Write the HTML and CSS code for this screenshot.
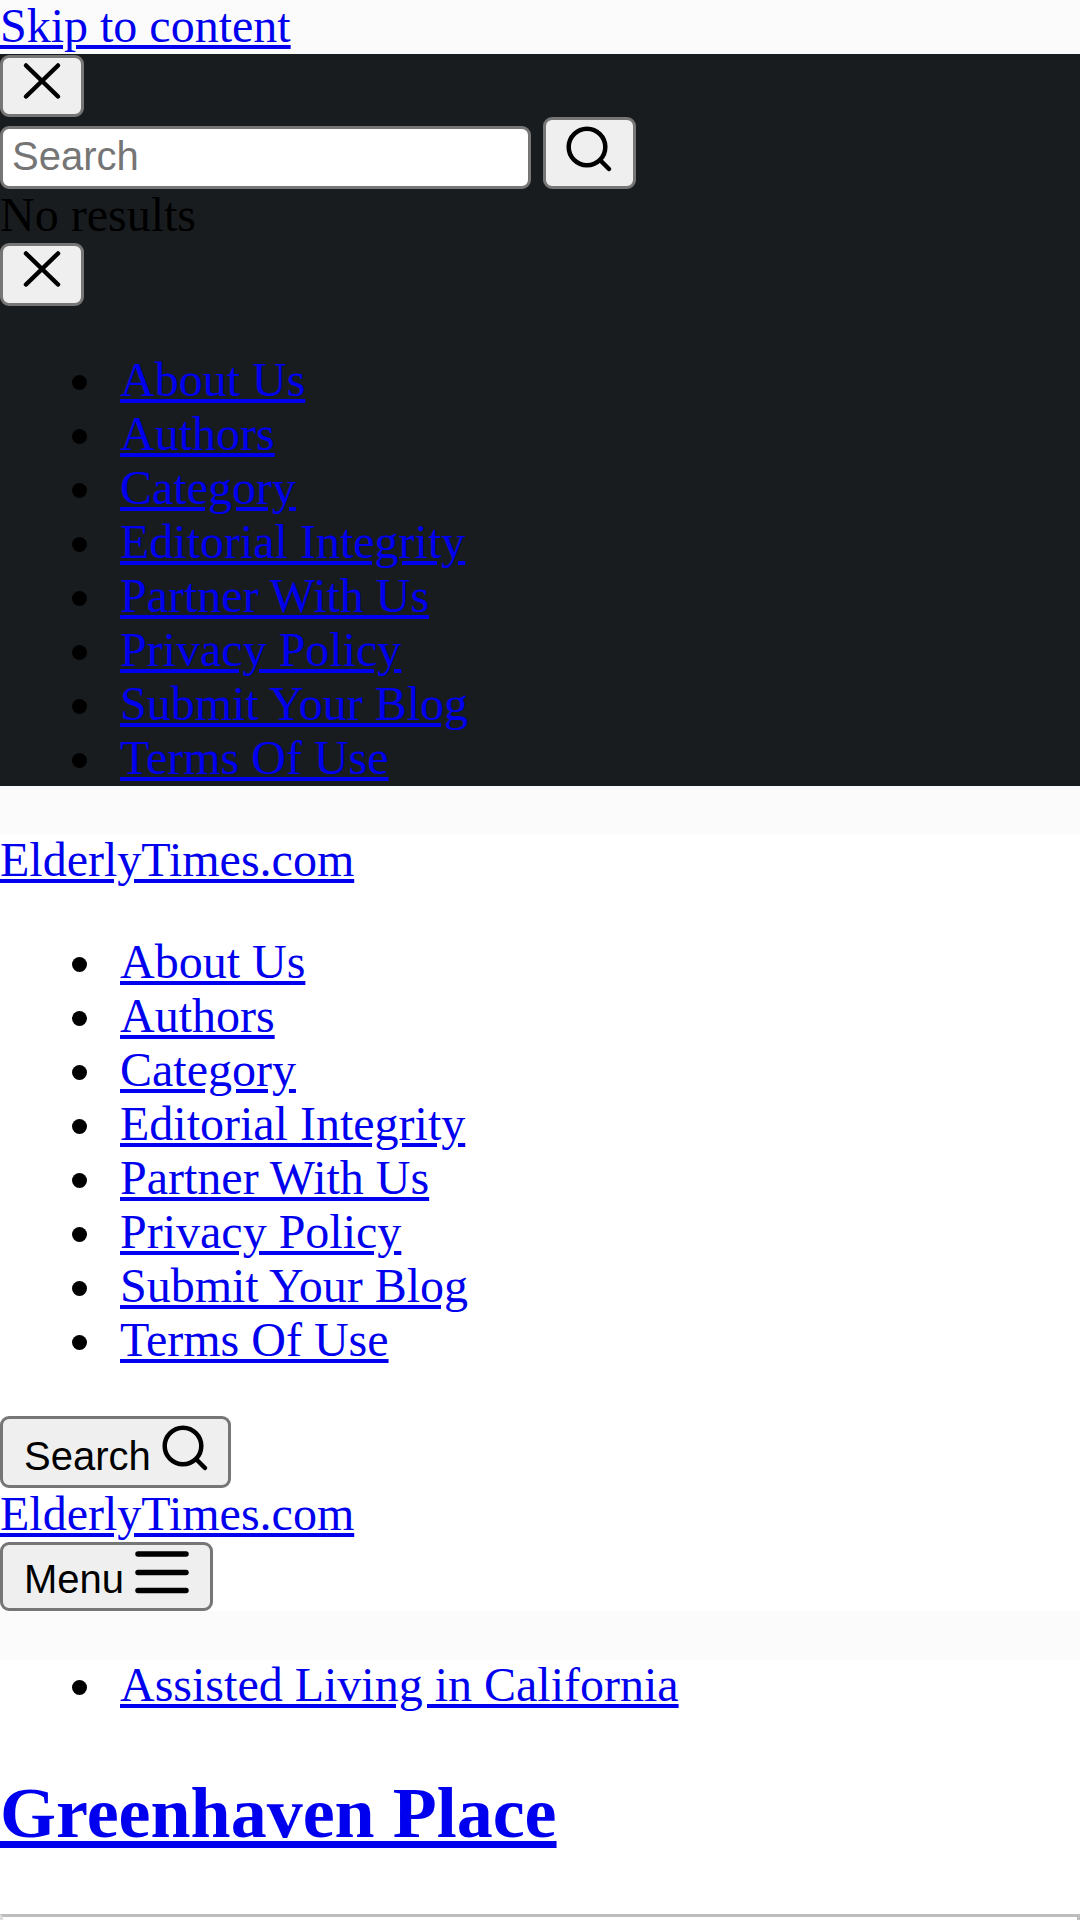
FILE: index.html
```html
<!DOCTYPE html>
<html lang="en">
    <head>
        <meta charset="utf-8">
        <title>Greenhaven Place - ElderlyTimes.com</title>
        <link rel="stylesheet" href="styles.css">
    </head>
    <body>
        <div class="skip">
            <a href="#content">Skip to content</a>
        </div>
        <div class="drawer">
            <div class="drawer-row first">
                <button class="btn btn-icon" aria-label="Close">
                    <svg class="icon" viewBox="0 0 48 48"><path d="M8 8.5 L40 39.5 M40 8.5 L8 39.5"/></svg>
                </button>
            </div>
            <form class="search-form">
                <input class="search-input" type="text" placeholder="Search">
                <button class="btn btn-search" type="button" aria-label="Search">
                    <svg class="icon" viewBox="0 0 48 48"><circle cx="21" cy="21" r="18.3"/><path d="M34.5 34.5 L43 43"/></svg>
                </button>
            </form>
            <div class="no-results">No results</div>
            <div class="drawer-row last">
                <button class="btn btn-icon" aria-label="Close">
                    <svg class="icon" viewBox="0 0 48 48"><path d="M8 8.5 L40 39.5 M40 8.5 L8 39.5"/></svg>
                </button>
            </div>
            <ul class="nav-list">
                <li><a href="#">About Us</a></li>
                <li><a href="#">Authors</a></li>
                <li><a href="#">Category</a></li>
                <li><a href="#">Editorial Integrity</a></li>
                <li><a href="#">Partner With Us</a></li>
                <li><a href="#">Privacy Policy</a></li>
                <li><a href="#">Submit Your Blog</a></li>
                <li><a href="#">Terms Of Use</a></li>
            </ul>
        </div>
        <div class="spacer spacer-top"></div>
        <header class="site-header">
            <div class="brand"><a href="#">ElderlyTimes.com</a></div>
            <ul class="nav-list spaced">
                <li><a href="#">About Us</a></li>
                <li><a href="#">Authors</a></li>
                <li><a href="#">Category</a></li>
                <li><a href="#">Editorial Integrity</a></li>
                <li><a href="#">Partner With Us</a></li>
                <li><a href="#">Privacy Policy</a></li>
                <li><a href="#">Submit Your Blog</a></li>
                <li><a href="#">Terms Of Use</a></li>
            </ul>
            <div class="btn-row">
                <button class="btn btn-label btn-tall">Search
                    <svg class="icon" viewBox="0 0 48 48"><circle cx="21" cy="21" r="18.3"/><path d="M34.5 34.5 L43 43"/></svg>
                </button>
            </div>
            <div class="brand"><a href="#">ElderlyTimes.com</a></div>
            <div class="btn-row">
                <button class="btn btn-label btn-menu">Menu
                    <svg class="icon icon-menu" viewBox="0 0 54 48"><path d="M3 6 H51 M3 24.5 H51 M3 42.5 H51"/></svg>
                </button>
            </div>
        </header>
        <div class="spacer spacer-main"></div>
        <main id="content">
            <ul class="nav-list crumbs">
                <li><a href="#">Assisted Living in California</a></li>
            </ul>
            <h2 class="title"><a href="#">Greenhaven Place</a></h2>
            <div class="panel"></div>
        </main>
    </body>
</html>
```

FILE: styles.css
```css
html {
    height: 1920px;
    overflow: hidden;
    background-color: #fff;
}
body {
    margin: 0;
    height: 1920px;
    overflow: hidden;
    font-family: "Liberation Serif", "Times New Roman", serif;
    font-size: 48px;
    line-height: 54px;
    color: #000;
}
a {
    color: #0000ee;
}
.skip {
    height: 54px;
    line-height: 52px;
    background-color: #fbfbfb;
}
.drawer {
    background-color: #181c1f;
    height: 732px;
    overflow: hidden;
}
.drawer-row {
    display: flex;
    align-items: flex-start;
}
.drawer-row.first {
    padding-top: 1px;
}
.drawer-row.last .btn-icon {
    height: 63px;
}
.drawer-row.last + .nav-list {
    margin-top: 47px;
}
.btn {
    display: inline-flex;
    box-sizing: border-box;
    margin: 0;
    padding: 0;
    font-family: "Liberation Sans", Arial, sans-serif;
    font-size: 40px;
    color: #000;
    background-color: #efefef;
    border: 3px solid #767676;
    border-radius: 9px;
}
.btn-icon {
    justify-content: center;
    align-items: center;
    width: 84px;
    height: 62px;
}
.btn-icon .icon {
    margin-bottom: 11px;
}
.btn-search {
    justify-content: center;
    align-items: center;
    width: 93px;
    height: 72px;
    margin-left: 12px;
}
.btn-search .icon {
    margin-bottom: 7px;
}
.icon {
    flex: none;
    width: 48px;
    height: 48px;
    fill: none;
    stroke: #000;
    stroke-width: 4.5;
    stroke-linecap: round;
}
.search-form {
    display: flex;
    align-items: flex-end;
    height: 72px;
}
.search-input {
    box-sizing: border-box;
    width: 531px;
    height: 63px;
    margin: 0;
    padding: 0 9px 2px;
    font-family: "Liberation Sans", Arial, sans-serif;
    font-size: 40px;
    background-color: #fff;
    border: 3px solid #767676;
    border-radius: 9px;
}
.search-input::placeholder {
    color: #757575;
}
.no-results {
    height: 54px;
    line-height: 52px;
}
.nav-list {
    margin: 48px 0 0;
    padding-left: 120px;
    list-style: none;
}
.nav-list li::before {
    content: "";
    display: inline-block;
    width: 15px;
    height: 15px;
    margin-left: -48px;
    margin-right: 33px;
    vertical-align: 6px;
    border-radius: 50%;
    background-color: #000;
}
.spacer {
    background-color: #fbfbfb;
}
.spacer-top {
    height: 49px;
}
.spacer-main {
    height: 49px;
}
.site-header {
    margin-top: -1px;
}
.brand {
    line-height: 52px;
    padding-bottom: 2px;
}
.spaced {
    margin-bottom: 48px;
}
.spaced li {
    line-height: 52px;
    padding-bottom: 2px;
}
.btn-row {
    display: flex;
}
.btn-label {
    padding: 0 21px;
    gap: 11px;
    align-items: flex-end;
}
.btn-tall {
    width: 231px;
    height: 72px;
    padding-bottom: 6px;
}
.btn-tall .icon {
    margin-bottom: 6px;
}
.btn-menu {
    width: 213px;
    height: 69px;
    padding-bottom: 6px;
}
.icon-menu {
    width: 54px;
    height: 48px;
    stroke-width: 5.5;
    margin-bottom: 6px;
}
.crumbs {
    margin: 0;
}
.crumbs li {
    line-height: 50px;
    padding-bottom: 4px;
}
.title {
    margin: 58px 0 59px;
    font-size: 72px;
    line-height: 83px;
}
.panel {
    box-sizing: border-box;
    height: 60px;
    border: 3px solid #bdbdbd;
    border-left-color: #ddd;
}
```
